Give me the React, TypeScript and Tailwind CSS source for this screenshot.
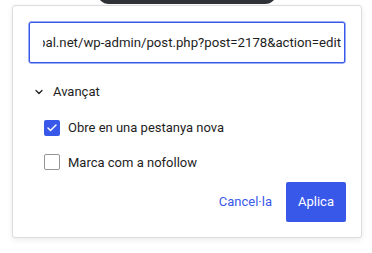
import { Check, ChevronDown } from "lucide-react";

export default function App() {
  return (
    <div className="relative w-[372px] h-[253px] bg-white overflow-hidden font-['Roboto',sans-serif]">
      <div className="absolute left-[97px] top-[-20px] w-[180px] h-[24px] rounded-[12px] bg-[#2f3337]" />
      <div className="absolute left-[12px] top-[5px] w-[350px] h-[233px] bg-white border border-[#dcdcde] rounded-[3px] shadow-[0_2px_6px_rgba(0,0,0,0.08)]">
        <div className="pt-[16px] px-[16px]">
          <div className="h-[41px] border border-[#3858e9] rounded-[2px] shadow-[0_0_0_0.5px_#3858e9] px-[13px] pr-[3px]">
            <div className="h-full flex items-center justify-end overflow-hidden">
              <span className="whitespace-nowrap text-[13.2px] text-[#1e1e1e]">
                https://www.exemple-global.net/wp-admin/post.php?post=2178&amp;action=edit
              </span>
            </div>
          </div>
        </div>
        <div className="flex items-center gap-[8px] mt-[19px] pl-[20px] h-[20px]">
          <ChevronDown size={12} strokeWidth={2.5} className="text-[#1e1e1e]" />
          <span className="text-[13px] text-[#1e1e1e]">Avançat</span>
        </div>
        <div className="flex flex-col gap-[15px] mt-[16px] pl-[31px]">
          <label className="flex items-center gap-[8px]">
            <span className="w-[16px] h-[16px] rounded-[2px] bg-[#3858e9] flex items-center justify-center">
              <Check size={12} strokeWidth={3} className="text-white" />
            </span>
            <span className="text-[13px] text-[#1e1e1e]">Obre en una pestanya nova</span>
          </label>
          <label className="flex items-center gap-[8px]">
            <span className="w-[16px] h-[16px] rounded-[2px] border border-[#949494] bg-white" />
            <span className="text-[13px] text-[#1e1e1e]">Marca com a nofollow</span>
          </label>
        </div>
        <div className="absolute right-[15px] bottom-[15px] flex items-center gap-[8px]">
          <button className="h-[40px] px-[6px] text-[13px] text-[#3858e9]">Cancel·la</button>
          <button className="h-[40px] w-[60px] rounded-[2px] bg-[#3858e9] text-white text-[13px]">Aplica</button>
        </div>
      </div>
    </div>
  );
}
